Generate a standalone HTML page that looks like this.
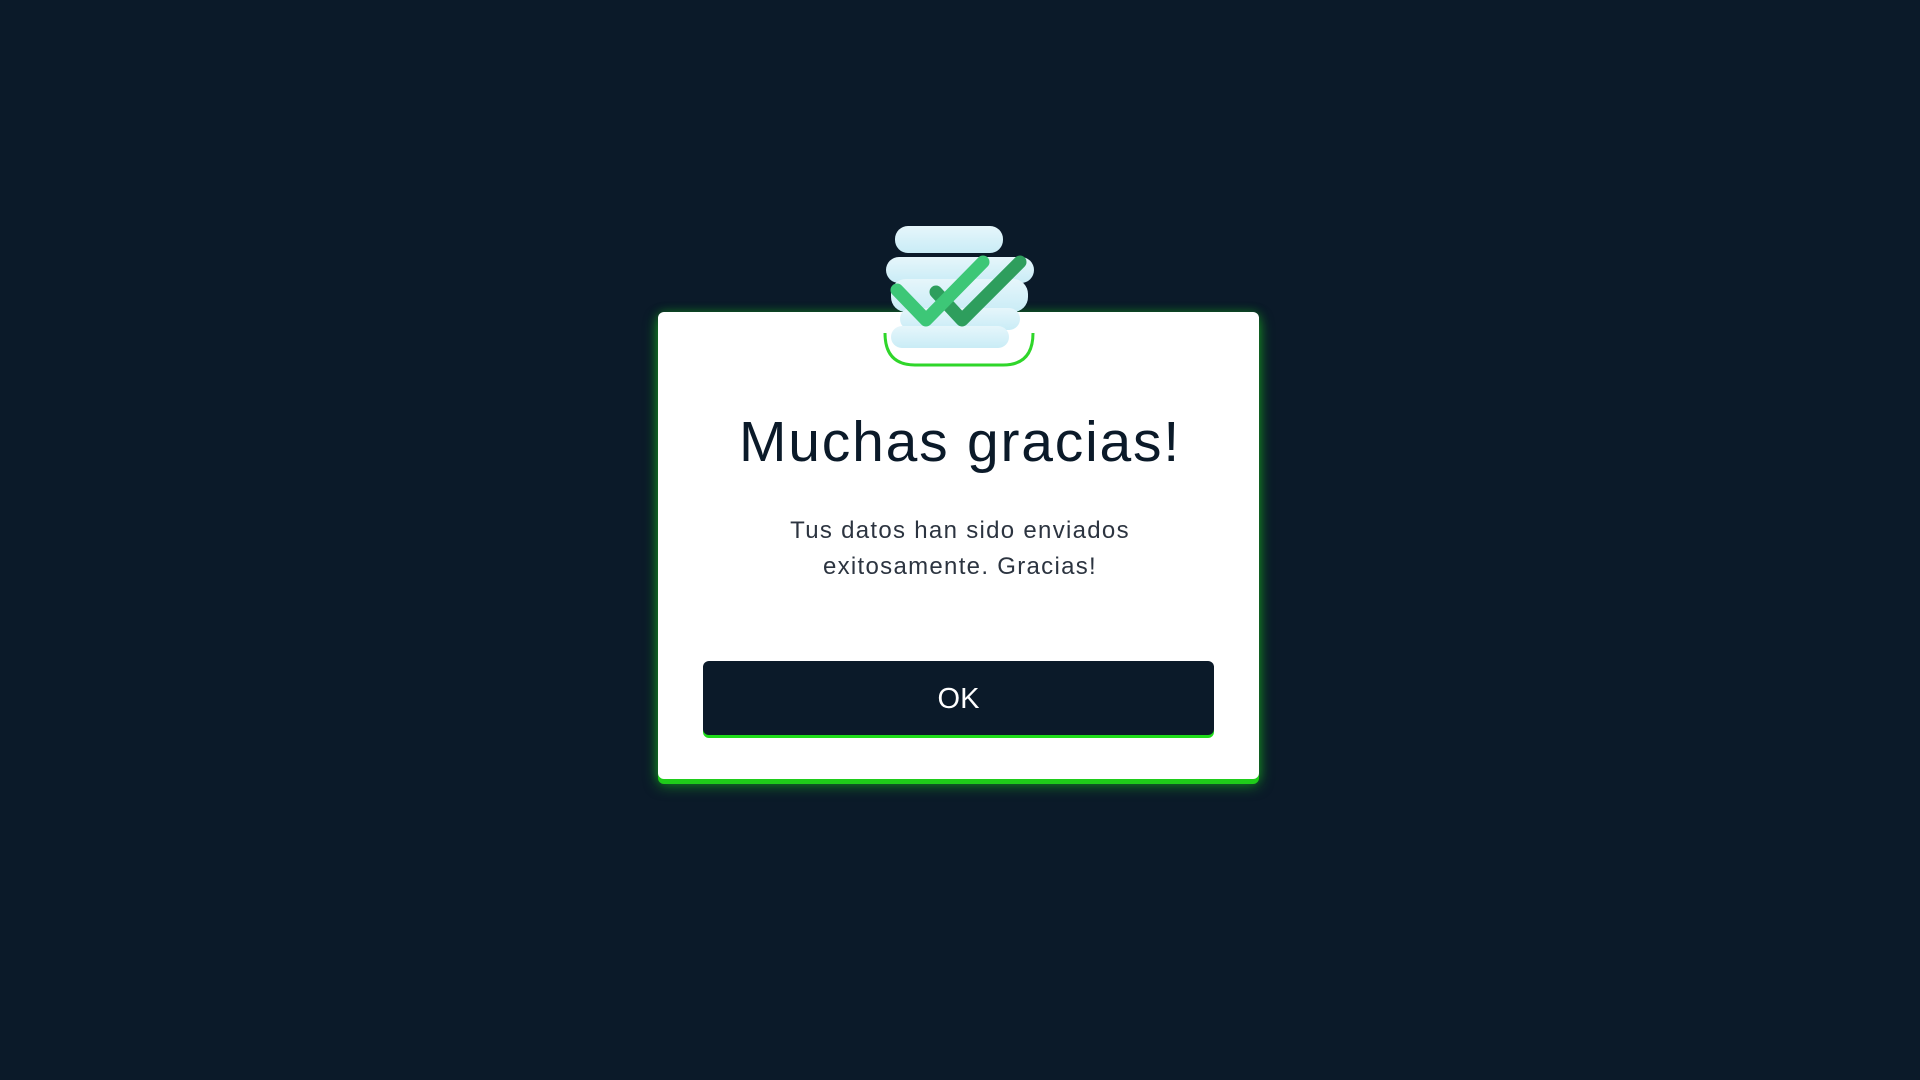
<!DOCTYPE html>
<html><head><meta charset="utf-8"><style>
html,body{margin:0;padding:0;width:1920px;height:1080px;background:#0b1a29;overflow:hidden;font-family:"Liberation Sans",sans-serif}
.card{position:absolute;left:658px;top:312px;width:601px;height:467px;background:#fff;border-radius:6px;box-shadow:0 5px 0 #1fcc1a,0 6px 14px rgba(30,220,30,.55),0 0 10px rgba(30,200,30,.35)}
h1{position:absolute;left:0;width:100%;top:407px;margin:0;text-align:center;font-size:57px;font-weight:normal;letter-spacing:1.8px;color:#0b1a29;line-height:70px}
.t{position:absolute;left:0;width:100%;top:513px;text-align:center;font-size:24px;line-height:36px;color:#2c3440;letter-spacing:1.3px}
.btn{position:absolute;left:703px;top:661px;width:511px;height:74px;background:#0b1a29;border-radius:6px;box-shadow:0 3px 0 #1fdd1a;color:#fff;font-size:29px;text-align:center;line-height:76px}
svg{position:absolute;left:0;top:0}
</style></head><body>
<div class="card"></div>
<svg width="1920" height="1080">
<defs><linearGradient id="g" x1="0" y1="0" x2="0" y2="1"><stop offset="0" stop-color="#e6f6fb"/><stop offset="1" stop-color="#c9ecf6"/></linearGradient></defs>
<path d="M885 333 Q885 365 915 365 L1003 365 Q1033 365 1033 333" fill="none" stroke="#2fd62a" stroke-width="3"/>
<g fill="url(#g)">
<rect x="895" y="226" width="108" height="27" rx="13"/>
<rect x="886" y="257" width="148" height="26" rx="13"/>
<rect x="891" y="279" width="137" height="33" rx="15"/>
<rect x="900" y="308" width="120" height="22" rx="11"/>
<rect x="891" y="326" width="118" height="22" rx="11"/>
</g>
<polyline points="936,292 962,320 1020,262" fill="none" stroke="#2e9e5d" stroke-width="13" stroke-linecap="round" stroke-linejoin="round"/>
<polyline points="897,290 926,320 983,262" fill="none" stroke="#3dc777" stroke-width="13" stroke-linecap="round" stroke-linejoin="round"/>
</svg>
<h1>Muchas gracias!</h1>
<div class="t">Tus datos han sido enviados<br>exitosamente. Gracias!</div>
<div class="btn">OK</div>
</body></html>
